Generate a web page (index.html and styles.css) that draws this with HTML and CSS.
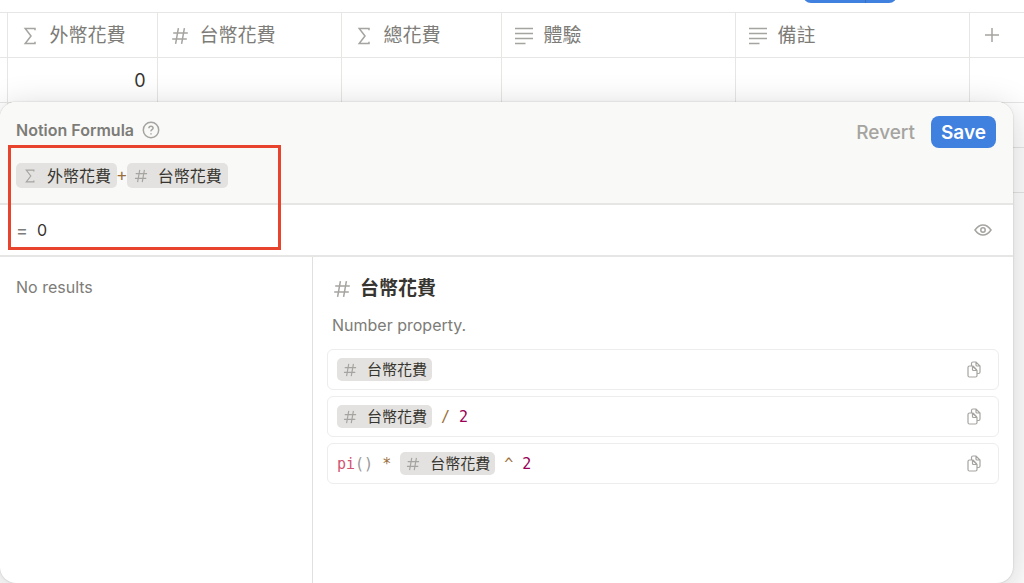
FILE: index.html
```
<!DOCTYPE html>
<html lang="zh-Hant">
	<head>
		<meta charset="utf-8">
		<meta name="viewport" content="width=device-width, initial-scale=1">
		<title>Notion Formula</title>
		<link rel="stylesheet" href="styles.css">
	</head>

	<body>
		<!-- shared icons -->
		<svg class="sprite" aria-hidden="true">
			<symbol id="sigma" viewBox="0 0 18 18">
				<path d="M14 3.2V1.5H4.2L10 9l-5.8 7.5H14v-1.7" />
			</symbol>
			<symbol id="hash" viewBox="0 0 18 18">
				<path d="M7.4 1.2 4.6 16.8M13.4 1.2l-2.8 15.6M2.2 6h14.6M1.2 12h14.6" />
			</symbol>
			<symbol id="lines" viewBox="0 0 20 18">
				<path d="M1 1.5h18M1 6.5h18M1 11.5h18M1 16.5h10.5" />
			</symbol>
			<symbol id="copy" viewBox="0 0 14 17">
				<path d="M1 6.500Q1 5 2.500 5H5.500L10 9.500V14.500Q10 16 8.500 16H2.500Q1 16 1 14.500zM5.500 5V8.500Q5.500 9.500 6.500 9.500H10M4.500 4.800V2.500Q4.500 1 6 1H9L13 5V11Q13 12.500 11.500 12.500H10.200M9 1V4Q9 5 10 5H13M6 4.800 9.800 8.800" />
			</symbol>
		</svg>

		<div class="toolbar">
			<button class="new" aria-label="New"></button>
			<button class="new arrow" aria-label="More templates"></button>
		</div>

		<table class="database">
			<colgroup>
				<col class="handle">
				<col class="foreign">
				<col class="local">
				<col class="total">
				<col class="note">
				<col class="note">
				<col>
			</colgroup>
			<thead>
				<tr>
					<td></td>
					<th><div class="prop"><svg class="icon"><use href="#sigma" /></svg>外幣花費</div></th>
					<th><div class="prop"><svg class="icon"><use href="#hash" /></svg>台幣花費</div></th>
					<th><div class="prop"><svg class="icon"><use href="#sigma" /></svg>總花費</div></th>
					<th><div class="prop"><svg class="icon"><use href="#lines" /></svg>體驗</div></th>
					<th><div class="prop"><svg class="icon"><use href="#lines" /></svg>備註</div></th>
					<th>
						<button class="add" aria-label="Add property">
							<svg class="icon" viewBox="0 0 18 18"><path d="M9 2v14M2 9h14" /></svg>
						</button>
					</th>
				</tr>
			</thead>
			<tbody>
				<tr><td></td><td class="number">0</td><td></td><td></td><td></td><td></td><td></td></tr>
				<tr><td></td><td></td><td></td><td></td><td></td><td></td><td></td></tr>
				<tr><td></td><td></td><td></td><td></td><td></td><td></td><td></td></tr>
			</tbody>
		</table>

		<main class="editor">
			<section class="formula">
				<div class="formula-head">
					<h1>Notion Formula</h1>
					<button class="help" aria-label="Help">
						<svg viewBox="0 0 18 18"><circle cx="9" cy="9" r="7.700" /><path d="M6.900 7.300Q7 5.300 9 5.300t2.100 1.800Q11.100 8 10 8.700T9 10.400M9 12.200v1.200" /></svg>
					</button>
					<div class="actions">
						<button class="revert">Revert</button>
						<button class="save">Save</button>
					</div>
				</div>
				<div class="expression">
					<span class="token"><svg class="icon"><use href="#sigma" /></svg>外幣花費</span><span class="operator">+</span><span class="token"><svg class="icon"><use href="#hash" /></svg>台幣花費</span>
				</div>
			</section>

			<section class="result">
				<span class="equals">=</span>
				<output>0</output>
				<button class="preview" aria-label="Preview">
					<svg viewBox="0 0 18 12"><path d="M1 6Q4.500 1 9 1t8 5q-3.500 5-8 5T1 6z" /><circle cx="9" cy="6" r="2.200" /></svg>
				</button>
			</section>

			<div class="columns">
				<aside class="list">No results</aside>
				<section class="detail">
					<h2><svg class="icon"><use href="#hash" /></svg>台幣花費</h2>
					<p>Number property.</p>
					<div class="example">
						<code><span class="token"><svg class="icon"><use href="#hash" /></svg>台幣花費</span></code>
						<button class="copy" aria-label="Copy"><svg><use href="#copy" /></svg></button>
					</div>
					<div class="example">
						<code><span class="token"><svg class="icon"><use href="#hash" /></svg>台幣花費</span> <span class="operator">/</span> <span class="value">2</span></code>
						<button class="copy" aria-label="Copy"><svg><use href="#copy" /></svg></button>
					</div>
					<div class="example">
						<code><span><span class="function">pi</span><span class="paren">()</span></span> <span class="operator">*</span> <span class="token"><svg class="icon"><use href="#hash" /></svg>台幣花費</span> <span class="operator">^</span> <span class="value">2</span></code>
						<button class="copy" aria-label="Copy"><svg><use href="#copy" /></svg></button>
					</div>
				</section>
			</div>

			<div class="highlight"></div>
		</main>
	</body>
</html>
```

FILE: styles.css
```
* {
	box-sizing: border-box;
}

body {
	margin: 0;
	position: relative;
	min-height: 100vh;
	overflow: hidden;
	background: white;
	color: #37352f;
	font-family: Inter, "Noto Sans CJK TC", sans-serif;
	font-size: 16px;
}

button {
	display: flex;
	align-items: center;
	justify-content: center;
	padding: 0;
	border: none;
	background: none;
	color: #a5a4a0;
	font-family: inherit;
	cursor: pointer;
}

svg {
	fill: none;
	stroke: currentColor;
	stroke-width: 1.5;
}

.sprite {
	display: none;
}

.icon {
	flex: none;
	width: 20px;
	height: 18px;
	color: #a5a4a0;
}

/* Toolbar, scrolled almost out of view */

.toolbar {
	display: flex;
	justify-content: flex-end;
	align-items: flex-start;
	height: 12px;
	padding-right: 127px;
}

.new {
	width: 62px;
	height: 32px;
	margin-top: -29px;
	border-radius: 8px 0 0 8px;
	background: #4080de;
}

.new.arrow {
	width: 32px;
	border-left: 1px solid #3a6fc0;
	border-radius: 0 8px 8px 0;
}

/* Database */

.database {
	width: 100%;
	table-layout: fixed;
	border-collapse: collapse;
}

.handle { width: 7px; }
.foreign { width: 150px; }
.local { width: 184px; }
.total { width: 160px; }
.note { width: 234px; }

.database th,
.database td {
	height: 45px;
	padding: 0;
	border: 1px solid #e6e6e5;
	border-left: none;
}

.database tr > :last-child {
	border-right: none;
}

.prop {
	display: flex;
	align-items: center;
	gap: 10px;
	padding: 2px 0 0 12px;
	color: #7d7c78;
	font-size: 19px;
	font-weight: 400;
	line-height: 24px;
}

.add {
	padding-left: 12px;
}

.database .number {
	padding-right: 11px;
	font-size: 18px;
	text-align: right;
}

/* Formula editor */

.editor {
	position: absolute;
	top: 102px;
	right: 11px;
	bottom: 0;
	left: 0;
	display: flex;
	flex-direction: column;
	overflow: hidden;
	border-radius: 16px;
	background: white;
	box-shadow: 0 0 2px rgba(15, 15, 15, 0.2), 0 8px 36px rgba(15, 15, 15, 0.2);
}

.formula {
	padding: 14px 17px 15px 16px;
	border-bottom: 2px solid #e6e6e5;
	background: #f9f9f7;
}

.formula-head {
	display: flex;
	align-items: flex-start;
	gap: 8px;
	margin-bottom: 15px;
}

h1 {
	margin: 0;
	color: #7d7c78;
	font-size: 16px;
	font-weight: 600;
	line-height: 28px;
}

.help {
	height: 28px;
}

.help svg {
	width: 18px;
	height: 18px;
}

.actions {
	display: flex;
	gap: 16px;
	margin-left: auto;
}

.revert,
.save {
	height: 32px;
	font-size: 19px;
	font-weight: 500;
}

.save {
	padding: 0 10px;
	border-radius: 8px;
	background: #4080de;
	color: white;
	font-weight: 600;
}

.expression {
	display: flex;
	align-items: center;
	font-family: "DejaVu Sans Mono", monospace;
}

.token {
	display: inline-flex;
	align-items: center;
	gap: 9px;
	height: 25px;
	padding: 0 6px;
	border-radius: 5px;
	background: #e3e2e0;
	font-family: Inter, "Noto Sans CJK TC", sans-serif;
	line-height: 24px;
}

.token .icon {
	width: 16px;
	height: 14px;
}

.operator { color: #9a6e3a; }
.value { color: #990055; }
.function { color: #d15470; }
.paren { color: #999999; }

.result {
	display: flex;
	align-items: center;
	gap: 9px;
	height: 52px;
	padding: 0 21px 0 16px;
	border-bottom: 2px solid #e6e6e5;
}

.equals {
	color: #7d7c78;
	font-size: 18px;
}

.preview {
	margin-left: auto;
}

.preview svg {
	width: 18px;
	height: 12px;
}

.columns {
	display: flex;
	flex: 1;
}

.list {
	width: 313px;
	padding: 18px 16px;
	border-right: 1px solid #e0e0df;
	color: #7d7c78;
	line-height: 24px;
}

.detail {
	flex: 1;
	padding: 18px 14px;
}

h2 {
	display: flex;
	align-items: center;
	gap: 8px;
	margin: 0;
	padding: 2px 0 0 5px;
	font-size: 19px;
	font-weight: 700;
	line-height: 24px;
}

.detail p {
	margin: 12px 0;
	padding-left: 5px;
	color: #7d7c78;
	line-height: 24px;
}

.example {
	display: flex;
	align-items: center;
	justify-content: space-between;
	height: 41px;
	margin-bottom: 6px;
	padding: 0 17px 0 9px;
	border: 1px solid #ededec;
	border-radius: 6px;
}

.example code {
	display: flex;
	align-items: center;
	gap: 9px;
	font-family: "DejaVu Sans Mono", monospace;
	font-size: 15px;
}

.example .token {
	height: 23px;
	padding: 0 5px;
}

.copy svg {
	width: 14px;
	height: 17px;
	stroke-width: 1.2;
}

/* Red frame around the formula and its result */

.highlight {
	position: absolute;
	top: 43px;
	left: 8px;
	width: 273px;
	height: 105px;
	border: 3px solid #e8432d;
	pointer-events: none;
}
```
